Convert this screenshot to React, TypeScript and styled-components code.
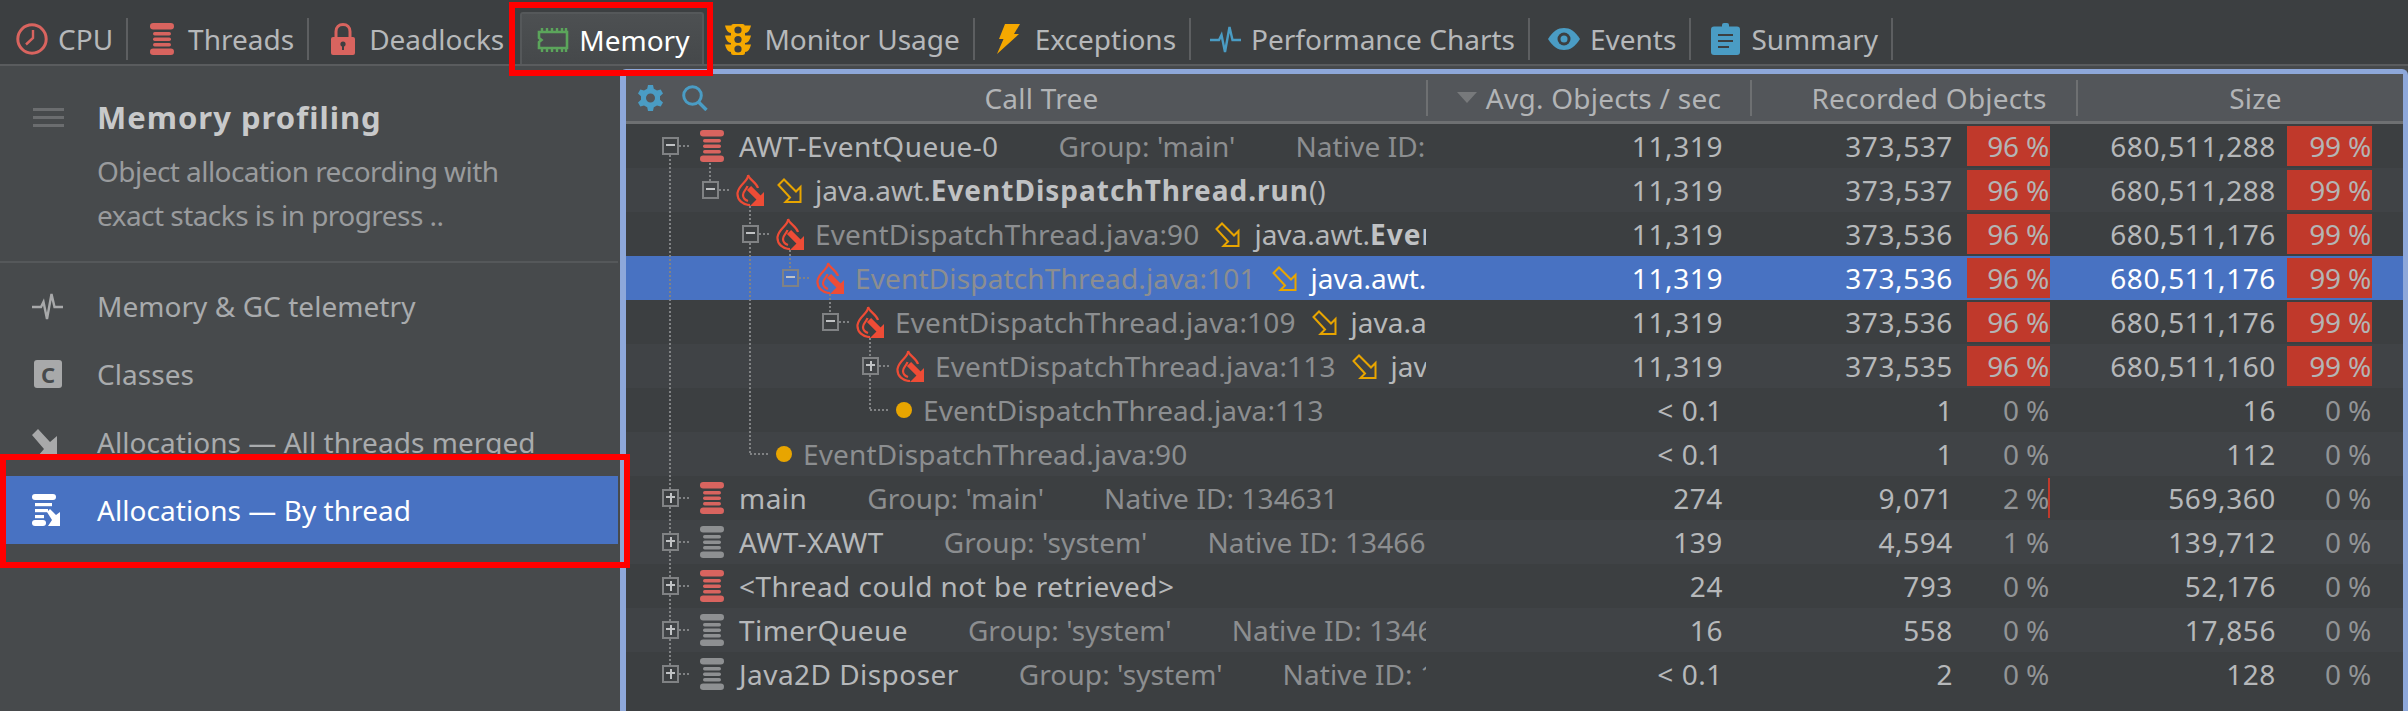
import React from 'react'
import styled, { createGlobalStyle } from 'styled-components'

const FONT = '"Noto Sans", "Open Sans", sans-serif'

const GlobalStyle = createGlobalStyle`
  html, body {
    margin: 0;
    padding: 0;
    background: #3c3f41;
    font-family: ${FONT};
  }
  * {
    box-sizing: border-box;
  }
`

const Page = styled.div`
  position: relative;
  width: 2408px;
  height: 711px;
  overflow: hidden;
  display: flex;
  flex-direction: column;
  font-size: 28px;
  color: #b6b8ba;
`

const RedBox = styled.div<{ $left: number; $top: number; $w: number; $h: number }>`
  position: absolute;
  left: ${({ $left }) => $left}px;
  top: ${({ $top }) => $top}px;
  width: ${({ $w }) => $w}px;
  height: ${({ $h }) => $h}px;
  border: 6px solid #ff0000;
  pointer-events: none;
`

/* ---------- top tabs ---------- */

const Toolbar = styled.div`
  flex: 0 0 66px;
  display: flex;
  align-items: flex-end;
  background: #3c3f41;
  border-bottom: 2px solid #5a5c5e;
  padding-bottom: 4px;
`

const Tab = styled.div<{ $active?: boolean }>`
  height: ${({ $active }) => ($active ? '52px' : '42px')};
  margin-bottom: ${({ $active }) => ($active ? '-4px' : '0')};
  display: flex;
  align-items: center;
  gap: 10px;
  padding: ${({ $active }) => ($active ? '6px 13px 4px 15px' : '0 13px 0 18px')};
  border-right: ${({ $active }) => ($active ? '0' : '2px solid #5d5f61')};
  color: ${({ $active }) => ($active ? '#ffffff' : '#b6b8ba')};
  white-space: nowrap;
  &:first-child {
    padding-left: 16px;
  }
  ${({ $active }) =>
    $active &&
    `
    background: linear-gradient(#4d5052, #45484a);
    border: 2px solid #55585a;
    border-bottom: 0;
    border-radius: 3px 3px 0 0;
    margin-left: 3px;
  `}
`

const TabPlain = styled(Tab)`
  border-right: 0;
`

const TabIcon = styled.span`
  flex: 0 0 32px;
  height: 32px;
  display: flex;
  align-items: center;
  justify-content: center;
`

/* ---------- layout ---------- */

const Main = styled.div`
  flex: 1;
  min-height: 0;
  display: flex;
  background: #474a4c;
`

const Sidebar = styled.aside`
  flex: 0 0 620px;
  display: flex;
  flex-direction: column;
  padding-right: 2px;
`

const SideHead = styled.div`
  display: flex;
  height: 197px;
  padding: 31px 0 0 33px;
  border-bottom: 2px solid #55585a;
`

const Hamburger = styled.div`
  flex: 0 0 64px;
  height: 19px;
  width: 31px;
  margin-top: 11px;
  display: flex;
  flex-direction: column;
  justify-content: space-between;
  & > i {
    display: block;
    width: 31px;
    height: 3px;
    background: #6b6d6f;
  }
`

const SideTitle = styled.div`
  font-size: 31px;
  line-height: 40px;
  font-weight: 700;
  letter-spacing: 1px;
  color: #c8c9ca;
`

const SideDesc = styled.div`
  margin-top: 12px;
  line-height: 44px;
  letter-spacing: -0.55px;
  color: #999b9d;
`

const SideList = styled.div`
  padding-top: 9px;
`

const SideItem = styled.div<{ $selected?: boolean }>`
  height: 68px;
  display: flex;
  align-items: center;
  padding-left: 32px;
  letter-spacing: 0.05px;
  background: ${({ $selected }) => ($selected ? '#4872c2' : 'transparent')};
  color: ${({ $selected }) => ($selected ? '#ffffff' : '#a9abad')};
`

const SideIcon = styled.span`
  flex: 0 0 65px;
  display: flex;
  align-items: center;
`

const ClassBadge = styled.span`
  width: 28px;
  height: 28px;
  margin-left: 2px;
  border-radius: 3px;
  background: #a8a9aa;
  color: #474a4c;
  font-size: 22px;
  font-weight: 700;
  letter-spacing: 0;
  line-height: 28px;
  text-align: center;
`

/* ---------- table ---------- */

const Panel = styled.section`
  flex: 1;
  min-width: 0;
  margin-top: 3px;
  display: flex;
  flex-direction: column;
  border: 5px solid #8ea8da;
  border-bottom: 0;
  border-left-width: 6px;
  border-radius: 6px 6px 0 0;
  background: #3c3f41;
  box-shadow: inset 0 1px 0 #4f6db5;
`

const TableHead = styled.div`
  flex: 0 0 50px;
  display: grid;
  grid-template-columns: 802px 324px 326px 325px;
  align-items: center;
  background: #53565a;
  border-bottom: 3px solid #6e7072;
  color: #b2b4b6;
  letter-spacing: 0.25px;
`

const HeadCell = styled.div<{ $last?: boolean }>`
  height: 36px;
  display: flex;
  align-items: center;
  justify-content: center;
  padding-left: 30px;
  border-right: ${({ $last }) => ($last ? '0' : '2px solid #6e7072')};
  white-space: nowrap;
`

const TreeHeadCell = styled(HeadCell)`
  padding: 0 0 0 12px;
  gap: 19px;
`

const HeadTitle = styled.span`
  flex: 1;
  text-align: center;
  padding-right: 70px;
`

const SortArrow = styled.span`
  width: 0;
  height: 0;
  margin: 0 9px 0 -30px;
  border-left: 10px solid transparent;
  border-right: 10px solid transparent;
  border-top: 11px solid #77797b;
`

const TableBody = styled.div`
  position: relative;
  flex: 1;
  min-height: 0;
`

const Guides = styled.svg`
  position: absolute;
  left: 0;
  top: 0;
  pointer-events: none;
`

const Row = styled.div<{ $odd: boolean; $selected: boolean }>`
  height: 44px;
  display: grid;
  grid-template-columns: 802px 324px 326px 325px;
  background: ${({ $odd, $selected }) => ($selected ? '#4872c2' : $odd ? '#404346' : '#3c3f41')};
  color: ${({ $selected }) => ($selected ? '#ffffff' : '#b6b8ba')};
`

const TreeCell = styled.div<{ $depth: number }>`
  width: 800px;
  height: 44px;
  overflow: hidden;
  white-space: nowrap;
  display: flex;
  align-items: center;
  padding-left: ${({ $depth }) => 36 + 40 * $depth}px;
`

const Expander = styled.span`
  position: relative;
  flex: 0 0 17px;
  height: 18px;
  border: 2px solid #808284;
  &::before {
    content: '';
    position: absolute;
    left: 2px;
    right: 2px;
    top: 5px;
    height: 2px;
    background: #c0c2c4;
  }
`

const ExpanderPlus = styled(Expander)`
  &::after {
    content: '';
    position: absolute;
    top: 2px;
    bottom: 2px;
    left: 5.5px;
    width: 2px;
    background: #c0c2c4;
  }
`

const ExpanderGap = styled.span`
  flex: 0 0 17px;
`

const ThreadIconBox = styled.span`
  margin: 0 15px 0 21px;
  display: flex;
`

const ThreadName = styled.span`
  letter-spacing: 0.45px;
`

const FlameBox = styled.span`
  margin: 0 11px 0 17px;
  display: flex;
`

const LeafDot = styled.span`
  flex: 0 0 16px;
  height: 16px;
  margin: 0 11px 0 17px;
  border-radius: 50%;
  background: #e8a500;
`

const Dim = styled.span`
  color: #8c8e90;
  letter-spacing: 0.15px;
`

const GroupText = styled(Dim)`
  margin-left: 60px;
  letter-spacing: 0.1px;
`

const CallArrow = styled.span`
  display: flex;
  margin: 0 13px 0 2px;
`

const CallArrowAfter = styled(CallArrow)`
  margin: 0 14px 0 16px;
`

const MethodText = styled.span<{ $selected?: boolean }>`
  color: ${({ $selected }) => ($selected ? '#ffffff' : '#b6b8ba')};
  & b {
    font-weight: 700;
    letter-spacing: 1px;
    color: ${({ $selected }) => ($selected ? '#ffffff' : '#c0c2c4')};
  }
`

const NumCell = styled.div<{ $pad: number; $gap?: number }>`
  display: flex;
  justify-content: flex-end;
  align-items: center;
  letter-spacing: 0.6px;
  padding-right: ${({ $pad }) => $pad}px;
  gap: ${({ $gap }) => $gap ?? 0}px;
`

const PctBox = styled.span`
  position: relative;
  flex: 0 0 86px;
  height: 40px;
  line-height: 40px;
  text-align: right;
  letter-spacing: -0.2px;
  color: #929496;
`

const PctBar = styled.span`
  position: absolute;
  right: 0;
  top: 0;
  bottom: 0;
  background: #c0392b;
`

const PctText = styled.span<{ $hot: boolean }>`
  position: relative;
  padding-right: 1px;
  color: ${({ $hot }) => ($hot ? '#b4b4b4' : '#929496')};
`

/* ---------- icons ---------- */

const RED = '#d9645f'
const BLUE = '#4a9cc4'
const ORANGE = '#f5a800'

const ClockIcon = () => (
  <svg width="32" height="32" viewBox="0 0 32 32" fill="none" stroke={RED}>
    <circle cx="16" cy="16" r="14.2" strokeWidth="3" />
    <path d="M17 7 L17 15 L10 21.5" strokeWidth="2.4" />
  </svg>
)

const StackIcon = ({ color, w = 24, h = 32 }: { color: string; w?: number; h?: number }) => (
  <svg width={w} height={h} viewBox="0 0 24 32" fill={color}>
    <rect x="0" y="0" width="24" height="6.5" rx="3.2" />
    <rect x="3" y="9" width="18" height="3.5" rx="1.7" />
    <rect x="3" y="14.5" width="18" height="3.5" rx="1.7" />
    <rect x="3" y="20" width="18" height="3.5" rx="1.7" />
    <rect x="0" y="25.5" width="24" height="6.5" rx="3.2" />
  </svg>
)

const LockIcon = () => (
  <svg width="24" height="32" viewBox="0 0 24 32">
    <path d="M5 15 V8.5 C5 4 8 1.5 12 1.5 C16 1.5 19 4 19 8.5 V15" fill="none" stroke={RED} strokeWidth="3" />
    <rect x="0" y="14" width="24" height="18" rx="2" fill={RED} />
    <circle cx="12" cy="21" r="2.6" fill="#3c3f41" />
    <rect x="11" y="21" width="2" height="6" fill="#3c3f41" />
  </svg>
)

const ChipIcon = () => (
  <svg width="32" height="24" viewBox="0 0 32 24" fill="none" stroke="#5ba55b">
    <path d="M2 4 H30 V20 H2 V14 L4.5 12 L2 10 Z" strokeWidth="2.6" />
    <path d="M5 0 V3 M10 0 V3 M15 0 V3 M20 0 V3 M25 0 V3 M29 0 V3 M5 21 V24 M10 21 V24 M15 21 V24 M20 21 V24 M25 21 V24 M29 21 V24" strokeWidth="2.4" />
  </svg>
)

const TrafficIcon = () => (
  <svg width="26" height="31" viewBox="0 0 26 31" fill={ORANGE}>
    <rect x="6" y="0" width="14" height="31" rx="2.5" />
    <path d="M0 1.5 H6 V9 C3 9 1 6 0 1.5 Z M26 1.5 H20 V9 C23 9 25 6 26 1.5 Z" />
    <path d="M0 11.5 H6 V19 C3 19 1 16 0 11.5 Z M26 11.5 H20 V19 C23 19 25 16 26 11.5 Z" />
    <path d="M0 20.5 H6 V28 C3 28 1 25 0 20.5 Z M26 20.5 H20 V28 C23 28 25 25 26 20.5 Z" />
    <circle cx="13" cy="6" r="3.6" fill="#3c3f41" />
    <circle cx="13" cy="15.5" r="3.6" fill="#3c3f41" />
    <circle cx="13" cy="25" r="3.6" fill="#3c3f41" />
  </svg>
)

const BoltIcon = () => (
  <svg width="23" height="30" viewBox="0 0 23 30" fill={ORANGE}>
    <path d="M8 0 H23 L17 10 H22 L0 30 L6.5 15 H2 Z" />
  </svg>
)

const PulseIcon = ({ color, w = 31, h = 29 }: { color: string; w?: number; h?: number }) => (
  <svg width={w} height={h} viewBox="0 0 31 29" fill="none" stroke={color} strokeWidth="2.4">
    <path d="M0 15 H9 L11.5 10 L15 27 L19.5 2 L22.5 15 H31" />
  </svg>
)

const EyeIcon = () => (
  <svg width="32" height="22" viewBox="0 0 32 22">
    <path d="M0 11 C5 3 10 0 16 0 C22 0 27 3 32 11 C27 19 22 22 16 22 C10 22 5 19 0 11 Z" fill={BLUE} />
    <circle cx="16" cy="11" r="6.5" fill="#3c3f41" />
    <circle cx="16" cy="11" r="3.5" fill={BLUE} />
  </svg>
)

const ClipboardIcon = () => (
  <svg width="29" height="32" viewBox="0 0 29 32">
    <rect x="0" y="3.5" width="29" height="28.5" rx="3" fill={BLUE} />
    <rect x="11" y="0" width="7" height="6" rx="2" fill={BLUE} />
    <path d="M7 12 H22 M7 18 H22 M7 24 H18" stroke="#3c3f41" strokeWidth="2.2" />
  </svg>
)

const GearIcon = () => (
  <svg width="25" height="26" viewBox="0 0 25 26" fill={BLUE}>
    <path
      fillRule="evenodd"
      d="M10 0 H15 L15.8 3.8 L19 5.6 L22.7 4.4 L25 8.6 L22 11.2 V14.8 L25 17.4 L22.7 21.6 L19 20.4 L15.8 22.2 L15 26 H10 L9.2 22.2 L6 20.4 L2.3 21.6 L0 17.4 L3 14.8 V11.2 L0 8.6 L2.3 4.4 L6 5.6 L9.2 3.8 Z M12.5 8.5 A4.5 4.5 0 1 0 12.5 17.5 A4.5 4.5 0 1 0 12.5 8.5 Z"
    />
  </svg>
)

const SearchIcon = () => (
  <svg width="26" height="26" viewBox="0 0 26 26" fill="none" stroke={BLUE}>
    <circle cx="10.5" cy="10.5" r="8.8" strokeWidth="3" />
    <path d="M16.5 17 L24.5 25" strokeWidth="3.4" />
  </svg>
)

const FlameIcon = () => (
  <svg width="28" height="32" viewBox="0 0 28 32">
    <g fill="none" stroke="#ee4c36" strokeWidth="2.2">
      <path d="M12 1 C13 7 3 10 1.5 19 C1 26 7 31 14 31" />
      <path d="M12 1 C13.5 6 20 8 22 14" />
      <path d="M11.5 12 C11 15 7 17 7 21 C7 24 9 26 12 27" />
    </g>
    <path d="M13 14 L24 25" stroke="#ee4c36" strokeWidth="6" />
    <path d="M28 18 V32 H14 Z" fill="#ee4c36" />
  </svg>
)

const CallIcon = () => (
  <svg width="25" height="25" viewBox="0 0 25 25" fill="none" stroke="#e8a500" strokeWidth="2">
    <path d="M1.5 7 L7 1.5 L19 13.5 L23.5 9 V24 H8.5 L13 19.5 Z" />
  </svg>
)

const AllocArrowIcon = () => (
  <svg width="25" height="27" viewBox="0 0 25 27" fill="#a8a9aa">
    <path d="M0 6 L6 0 L18 13 L25 7 V27 H6 L12 20 Z" />
  </svg>
)

const ByThreadIcon = () => (
  <svg width="32" height="32" viewBox="0 0 32 32" fill="#ffffff">
    <rect x="0" y="0" width="24" height="6" rx="3" />
    <rect x="3" y="9" width="17" height="3.2" />
    <rect x="3" y="15" width="13" height="3.2" />
    <rect x="3" y="21" width="9" height="3.2" />
    <rect x="0" y="26" width="14" height="6" rx="3" />
    <path d="M15 18 L18 15 L24 21 L28 18 V32 H16 L20 26 Z" />
  </svg>
)

/* ---------- data ---------- */

type Col = { num: string; pct: number }

interface NodeBase {
  depth: number
  avg: string
  rec: Col
  size: Col
}

type TreeNode = NodeBase &
  (
    | { kind: 'thread'; plus?: boolean; hot: boolean; name: string; group?: string; native?: string }
    | { kind: 'frame'; plus?: boolean; file?: string; method: string; cls: string; call?: string }
    | { kind: 'leaf'; file: string }
  )

const RUN = 'EventDispatchThread.run'
const PUMP = 'EventDispatchThread.pumpEvents'

const nodes: TreeNode[] = [
  { kind: 'thread', depth: 0, hot: true, name: 'AWT-EventQueue-0', group: "Group: 'main'", native: 'Native ID: 134660', avg: '11,319', rec: { num: '373,537', pct: 96 }, size: { num: '680,511,288', pct: 99 } },
  { kind: 'frame', depth: 1, method: 'java.awt.', cls: RUN, call: '()', avg: '11,319', rec: { num: '373,537', pct: 96 }, size: { num: '680,511,288', pct: 99 } },
  { kind: 'frame', depth: 2, file: 'EventDispatchThread.java:90', method: 'java.awt.', cls: PUMP, call: '()', avg: '11,319', rec: { num: '373,536', pct: 96 }, size: { num: '680,511,176', pct: 99 } },
  { kind: 'frame', depth: 3, file: 'EventDispatchThread.java:101', method: 'java.awt.', cls: PUMP, call: '()', avg: '11,319', rec: { num: '373,536', pct: 96 }, size: { num: '680,511,176', pct: 99 } },
  { kind: 'frame', depth: 4, file: 'EventDispatchThread.java:109', method: 'java.awt.', cls: PUMP, call: '()', avg: '11,319', rec: { num: '373,536', pct: 96 }, size: { num: '680,511,176', pct: 99 } },
  { kind: 'frame', depth: 5, plus: true, file: 'EventDispatchThread.java:113', method: 'java.awt.', cls: PUMP, call: '()', avg: '11,319', rec: { num: '373,535', pct: 96 }, size: { num: '680,511,160', pct: 99 } },
  { kind: 'leaf', depth: 5, file: 'EventDispatchThread.java:113', avg: '< 0.1', rec: { num: '1', pct: 0 }, size: { num: '16', pct: 0 } },
  { kind: 'leaf', depth: 2, file: 'EventDispatchThread.java:90', avg: '< 0.1', rec: { num: '1', pct: 0 }, size: { num: '112', pct: 0 } },
  { kind: 'thread', depth: 0, plus: true, hot: true, name: 'main', group: "Group: 'main'", native: 'Native ID: 134631', avg: '274', rec: { num: '9,071', pct: 2 }, size: { num: '569,360', pct: 0 } },
  { kind: 'thread', depth: 0, plus: true, hot: false, name: 'AWT-XAWT', group: "Group: 'system'", native: 'Native ID: 134660', avg: '139', rec: { num: '4,594', pct: 1 }, size: { num: '139,712', pct: 0 } },
  { kind: 'thread', depth: 0, plus: true, hot: true, name: '<Thread could not be retrieved>', avg: '24', rec: { num: '793', pct: 0 }, size: { num: '52,176', pct: 0 } },
  { kind: 'thread', depth: 0, plus: true, hot: false, name: 'TimerQueue', group: "Group: 'system'", native: 'Native ID: 134660', avg: '16', rec: { num: '558', pct: 0 }, size: { num: '17,856', pct: 0 } },
  { kind: 'thread', depth: 0, plus: true, hot: false, name: 'Java2D Disposer', group: "Group: 'system'", native: 'Native ID: 134660', avg: '< 0.1', rec: { num: '2', pct: 0 }, size: { num: '128', pct: 0 } },
]

const SELECTED = 3
const cy = (i: number) => 22 + 44 * i

// dotted tree connectors: [x1, y1, x2, y2]
const guideLines: number[][] = [
  [44, 31, 44, cy(8) - 9],
  [44, cy(8) + 9, 44, cy(9) - 9],
  [44, cy(9) + 9, 44, cy(10) - 9],
  [44, cy(10) + 9, 44, cy(11) - 9],
  [44, cy(11) + 9, 44, cy(12) - 9],
  [84, 39, 84, cy(1) - 9],
  [124, cy(1) + 16, 124, cy(2) - 9],
  [124, cy(2) + 9, 124, cy(7)],
  [124, cy(7), 143, cy(7)],
  [164, cy(2) + 16, 164, cy(3) - 9],
  [204, cy(3) + 16, 204, cy(4) - 9],
  [244, cy(4) + 16, 244, cy(5) - 9],
  [244, cy(5) + 9, 244, cy(6)],
  [244, cy(6), 263, cy(6)],
  ...nodes
    .map((n, i) => ({ n, i }))
    .filter(({ n }) => n.kind !== 'leaf')
    .map(({ n, i }) => [44 + 40 * n.depth + 9, cy(i), 44 + 40 * n.depth + 19, cy(i)]),
]

const tabs: { label: string; icon: React.ReactNode; active?: boolean; plain?: boolean }[] = [
  { label: 'CPU', icon: <ClockIcon /> },
  { label: 'Threads', icon: <StackIcon color={RED} /> },
  { label: 'Deadlocks', icon: <LockIcon />, plain: true },
  { label: 'Memory', icon: <ChipIcon />, active: true },
  { label: 'Monitor Usage', icon: <TrafficIcon /> },
  { label: 'Exceptions', icon: <BoltIcon /> },
  { label: 'Performance Charts', icon: <PulseIcon color={BLUE} /> },
  { label: 'Events', icon: <EyeIcon /> },
  { label: 'Summary', icon: <ClipboardIcon /> },
]

const Percent = ({ pct }: { pct: number }) => (
  <PctBox>
    {pct > 1 && <PctBar style={{ width: `${pct}%` }} />}
    <PctText $hot={pct > 50}>{pct} %</PctText>
  </PctBox>
)

const NodeLabel = ({ node, selected }: { node: TreeNode; selected: boolean }) => {
  if (node.kind === 'leaf') {
    return (
      <>
        <ExpanderGap />
        <LeafDot />
        <Dim>{node.file}</Dim>
      </>
    )
  }
  const Toggle = node.plus ? ExpanderPlus : Expander
  if (node.kind === 'thread') {
    return (
      <>
        <Toggle />
        <ThreadIconBox>
          <StackIcon color={node.hot ? RED : '#8e9092'} />
        </ThreadIconBox>
        <ThreadName>{node.name}</ThreadName>
        {node.group && <GroupText>{node.group}</GroupText>}
        {node.native && <GroupText>{node.native}</GroupText>}
      </>
    )
  }
  return (
    <>
      <Toggle />
      <FlameBox>
        <FlameIcon />
      </FlameBox>
      {node.file ? (
        <>
          <Dim>{node.file}</Dim>
          <CallArrowAfter>
            <CallIcon />
          </CallArrowAfter>
        </>
      ) : (
        <CallArrow>
          <CallIcon />
        </CallArrow>
      )}
      <MethodText $selected={selected}>
        {node.method}
        <b>{node.cls}</b>
        {node.call}
      </MethodText>
    </>
  )
}

const App = () => (
  <Page>
    <GlobalStyle />
    <Toolbar>
      {tabs.map((t) => {
        const Item = t.plain ? TabPlain : Tab
        return (
          <Item key={t.label} $active={t.active}>
            <TabIcon>{t.icon}</TabIcon>
            {t.label}
          </Item>
        )
      })}
    </Toolbar>
    <Main>
      <Sidebar>
        <SideHead>
          <Hamburger>
            <i />
            <i />
            <i />
          </Hamburger>
          <div>
            <SideTitle>Memory profiling</SideTitle>
            <SideDesc>
              Object allocation recording with
              <br />
              exact stacks is in progress ..
            </SideDesc>
          </div>
        </SideHead>
        <SideList>
          <SideItem>
            <SideIcon>
              <PulseIcon color="#a8a9aa" />
            </SideIcon>
            Memory &amp; GC telemetry
          </SideItem>
          <SideItem>
            <SideIcon>
              <ClassBadge>C</ClassBadge>
            </SideIcon>
            Classes
          </SideItem>
          <SideItem>
            <SideIcon>
              <AllocArrowIcon />
            </SideIcon>
            Allocations — All threads merged
          </SideItem>
          <SideItem $selected>
            <SideIcon>
              <ByThreadIcon />
            </SideIcon>
            Allocations — By thread
          </SideItem>
        </SideList>
      </Sidebar>
      <Panel>
        <TableHead>
          <TreeHeadCell>
            <GearIcon />
            <SearchIcon />
            <HeadTitle>Call Tree</HeadTitle>
          </TreeHeadCell>
          <HeadCell>
            <SortArrow />
            Avg. Objects / sec
          </HeadCell>
          <HeadCell>Recorded Objects</HeadCell>
          <HeadCell $last>Size</HeadCell>
        </TableHead>
        <TableBody>
          {nodes.map((n, i) => (
            <Row key={i} $odd={i % 2 === 1} $selected={i === SELECTED}>
              <TreeCell $depth={n.depth}>
                <NodeLabel node={n} selected={i === SELECTED} />
              </TreeCell>
              <NumCell $pad={29}>{n.avg}</NumCell>
              <NumCell $pad={28} $gap={11}>
                {n.rec.num}
                <Percent pct={n.rec.pct} />
              </NumCell>
              <NumCell $pad={31} $gap={10}>
                {n.size.num}
                <Percent pct={n.size.pct} />
              </NumCell>
            </Row>
          ))}
          <Guides width="800" height="600" stroke="#808284" strokeWidth="2" strokeDasharray="2 2">
            {guideLines.map((l, i) => (
              <line key={i} x1={l[0]} y1={l[1]} x2={l[2]} y2={l[3]} />
            ))}
          </Guides>
        </TableBody>
      </Panel>
    </Main>
    <RedBox $left={509} $top={2} $w={204} $h={74} />
    <RedBox $left={0} $top={454} $w={630} $h={114} />
  </Page>
)

export default App
